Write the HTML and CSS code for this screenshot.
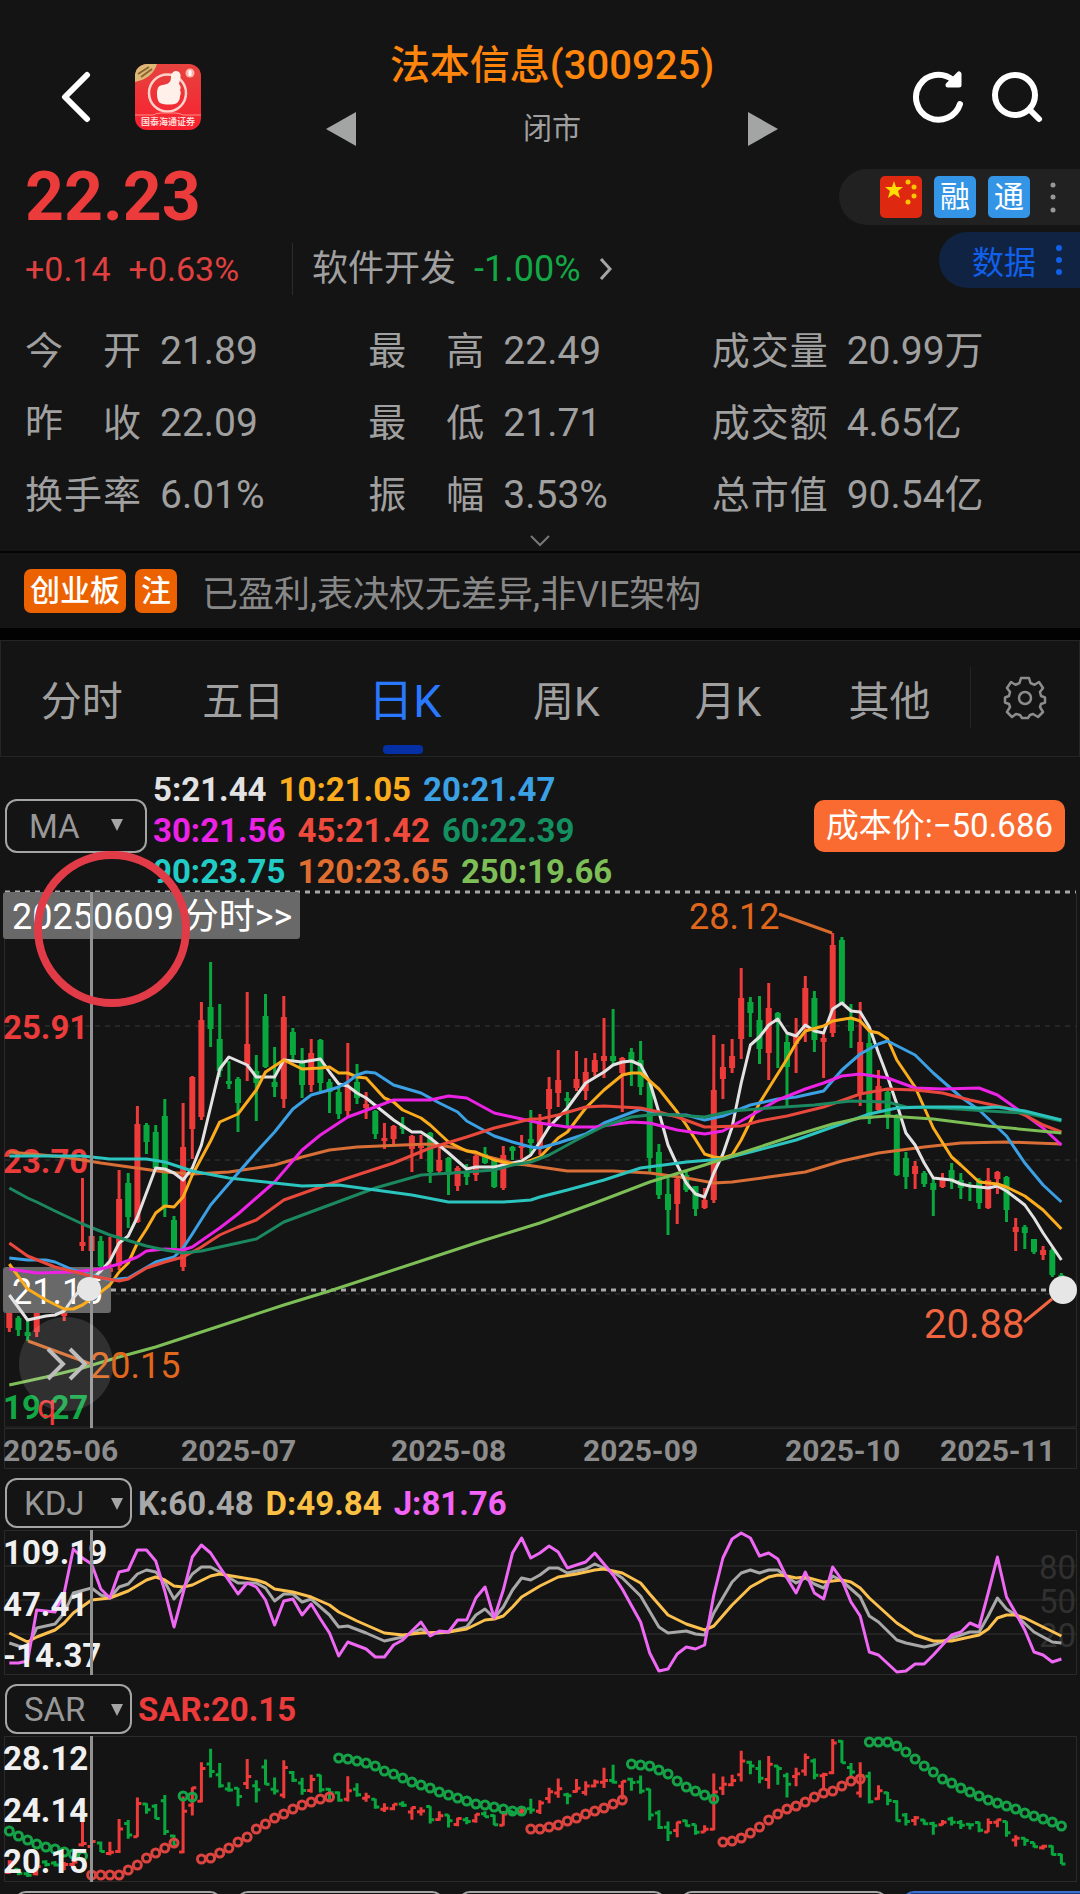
FILE: index.html
```html
<!DOCTYPE html>
<html lang="zh-CN">
<head>
  <meta charset="UTF-8" />
  <meta name="viewport" content="width=device-width, initial-scale=1.0"/>
  <meta name="theme-color" content="#141414">
  <title>法本信息(300925)</title>
  <link rel="stylesheet" href="styles.css">
</head>
<body>
  <header class="topbar">
    <div class="topbar-left">
      <button class="icon-btn back" aria-label="返回">
        <svg width="32" height="52" viewBox="0 0 32 52"><path d="M27 4 5 26l22 22" fill="none" stroke="#fff" stroke-width="6" stroke-linecap="round" stroke-linejoin="round"/></svg>
      </button>
      <svg class="logo" width="66" height="66" viewBox="0 0 66 66">
        <defs>
          <linearGradient id="logoRed" x1="0" y1="0" x2="0" y2="1"><stop offset="0" stop-color="#e6433f"/><stop offset="1" stop-color="#f8202f"/></linearGradient>
          <clipPath id="logoClip"><rect width="66" height="66" rx="12"/></clipPath>
        </defs>
        <g clip-path="url(#logoClip)">
          <rect width="66" height="66" fill="url(#logoRed)"/>
          <path d="M0 0h22Q18 14 0 18z" fill="#dcb877"/>
          <path d="M3 10 14 3M6 13 17 5" stroke="#8b6230" stroke-width="2"/>
          <circle cx="32.500" cy="29" r="18.500" fill="none" stroke="#fbd3cb" stroke-width="2.500"/>
          <path d="M23 24c1-3 5-3 9-4 4-2 4-5 4-8 1-5 5-6 8-4 3 3 1 8 0 12 2 2 2 4 1 6 1 2 1 4 0 6 0 3-1 5-3 7-4 2-12 2-17 0-3-2-4-11-2-15z" fill="#fff1ea"/>
          <circle cx="55" cy="9" r="4.500" fill="#ffb3a8"/>
          <rect x="53.500" y="6" width="3" height="6" rx="1.500" fill="#fff"/>
          <path d="M0 51h18q4-2 8-2h14q4 0 8 2h18" fill="none" stroke="#ff8d85" stroke-width="1"/>
        </g>
        <text x="33" y="61" text-anchor="middle" class="logo-text">国泰海通证券</text>
      </svg>
    </div>
    <div class="topbar-title">
      <h1>法本信息(300925)</h1>
      <div class="market">
        <button class="icon-btn" aria-label="上一只"><svg width="30" height="34" viewBox="0 0 30 34"><path d="M30 0v34L0 17z" fill="#a3a5a4"/></svg></button>
        <span>闭市</span>
        <button class="icon-btn" aria-label="下一只"><svg width="30" height="34" viewBox="0 0 30 34"><path d="M0 0v34l30-17z" fill="#a3a5a4"/></svg></button>
      </div>
    </div>
    <div class="topbar-right">
      <button class="icon-btn" aria-label="刷新">
        <svg width="56" height="56" viewBox="0 0 56 56"><path d="M50 35A22.500 22.500 0 1 1 43 11" fill="none" stroke="#fff" stroke-width="6" stroke-linecap="round"/><path d="M49 5v11H38z" fill="#fff" stroke="#fff" stroke-width="5" stroke-linejoin="round"/></svg>
      </button>
      <button class="icon-btn" aria-label="搜索">
        <svg width="56" height="56" viewBox="0 0 56 56"><circle cx="27" cy="26" r="20" fill="none" stroke="#fff" stroke-width="6"/><path d="m42 41 9 9" stroke="#fff" stroke-width="6" stroke-linecap="round"/></svg>
      </button>
    </div>
  </header>

  <section class="quote">
    <div class="quote-main">
      <div class="price">22.23</div>
      <div class="quote-row">
        <div class="delta"><span>+0.14</span><span>+0.63%</span></div>
        <a class="sector" href="#sector">软件开发 <span class="down">-1.00%</span>
          <svg width="14" height="26" viewBox="0 0 14 26"><path d="m2 3 9 10-9 10" fill="none" stroke="#a5a5a5" stroke-width="3"/></svg>
        </a>
      </div>
    </div>
    <div class="quote-side">
      <div class="pill">
        <svg width="42" height="42" viewBox="0 0 42 42">
          <rect width="42" height="42" rx="5" fill="#de2910"/>
          <path d="m14 5 2 6h7l-5 4 2 7-6-4-6 4 2-7-5-4h7z" fill="#ffde00"/>
          <g fill="#ffc400"><circle cx="28" cy="6" r="2.500"/><circle cx="34" cy="11" r="2.500"/><circle cx="34" cy="20" r="2.500"/><circle cx="28" cy="26" r="2.500"/></g>
        </svg>
        <span class="chip">融</span>
        <span class="chip">通</span>
        <svg width="22" height="42" viewBox="0 0 22 42" fill="#989898"><circle cx="11" cy="9" r="2.500"/><circle cx="11" cy="21" r="2.500"/><circle cx="11" cy="34" r="2.500"/></svg>
      </div>
      <button class="data-btn">数据
        <svg width="22" height="42" viewBox="0 0 22 42" fill="#1160ea"><circle cx="11" cy="9" r="3"/><circle cx="11" cy="21" r="3"/><circle cx="11" cy="33" r="3"/></svg>
      </button>
    </div>
  </section>

  <dl class="stats">
    <div><dt>今 开</dt><dd>21.89</dd></div>
    <div><dt>最 高</dt><dd>22.49</dd></div>
    <div><dt>成交量</dt><dd>20.99万</dd></div>
    <div><dt>昨 收</dt><dd>22.09</dd></div>
    <div><dt>最 低</dt><dd>21.71</dd></div>
    <div><dt>成交额</dt><dd>4.65亿</dd></div>
    <div><dt>换手率</dt><dd>6.01%</dd></div>
    <div><dt>振 幅</dt><dd>3.53%</dd></div>
    <div><dt>总市值</dt><dd>90.54亿</dd></div>
  </dl>
  <button class="icon-btn expand" aria-label="展开">
    <svg width="22" height="12" viewBox="0 0 22 12"><path d="m2 1 9 9 9-9" fill="none" stroke="#777" stroke-width="2"/></svg>
  </button>

  <div class="notice">
    <span class="tag">创业板</span>
    <span class="tag">注</span>
    <p>已盈利,表决权无差异,非VIE架构</p>
  </div>

  <nav class="tabs">
    <button>分时</button>
    <button>五日</button>
    <button class="active">日K</button>
    <button>周K</button>
    <button>月K</button>
    <button>其他</button>
    <button class="settings" aria-label="设置">
      <svg width="44" height="44" viewBox="0 0 44 44" fill="none" stroke="#8c8c8c" stroke-width="2.500" stroke-linejoin="round">
        <path d="M18 2h8l1.500 5 4 1.800L36 6l4 6-3 4 1 4 4 1.500v5L38 28l-1 3 3 5-5 5-5-3-3 1-2 3h-6l-2-3-4-1-4 3-5-5 3-5-1-3-4-1.500v-5L6 20l1-4-3-4 4-6 4.500 2.800 4-1.800z"/>
        <circle cx="22" cy="22" r="6"/>
      </svg>
    </button>
  </nav>

  <section class="ma-head">
    <div class="picker">
      <select aria-label="主图指标"><option>MA</option><option>BOLL</option></select>
    </div>
    <div class="ma-values">
      <div><span class="c-ma5">5:21.44</span><span class="c-ma10">10:21.05</span><span class="c-ma20">20:21.47</span></div>
      <div><span class="c-ma30">30:21.56</span><span class="c-ma45">45:21.42</span><span class="c-ma60">60:22.39</span></div>
      <div><span class="c-ma90">90:23.75</span><span class="c-ma120">120:23.65</span><span class="c-ma250">250:19.66</span></div>
    </div>
    <div class="cost">成本价:−50.686</div>
  </section>

  <div class="chart-wrap">
    <svg id="kline" class="chart" viewBox="0 -2 1080 580">
      <path class="frame" d="M4.500 1v534h1072V1M4.500 536.500h1072v40H4.500z"/>
      <path class="grid dashed" d="M5 134h1071M5 268h1071M5 402h1071"/>
      <text class="axis up" x="3" y="147">25.91</text>
      <text class="axis up" x="3" y="281">23.70</text>
      <text class="axis down" x="3" y="527">19.27</text>
      <text class="mark up" x="37" y="526">q</text>
      <g id="candles"></g>
      <path class="cursor-dots" d="M5 0h1071M111 398h965"/>
      <rect class="tip" x="3" y="0" width="297" height="47" rx="3"/>
      <text class="tip-text" x="12" y="37">20250609 分时&gt;&gt;</text>
      <rect class="tip" x="3" y="375" width="108" height="46" rx="3"/>
      <text class="tip-text" x="12" y="412">21.15</text>
      <g id="ma"></g>
      <g class="extreme">
        <text x="689" y="37">28.12</text><path d="m779 22 53 19"/>
        <text x="90" y="486">20.15</text><path d="m28 449 63 23"/>
      </g>
      <g class="last-price"><text x="924" y="446">20.88</text><path d="m1024 430 28-23"/></g>
      <path class="cursor" d="M91.500 0v536"/>
      <circle cx="89" cy="397" r="12" fill="#e6e6e6"/>
      <circle cx="1063" cy="398" r="14" fill="#e6e6e6"/>
      <g class="dates">
        <text x="3" y="569">2025-06</text><text x="181" y="569">2025-07</text><text x="391" y="569">2025-08</text>
        <text x="583" y="569">2025-09</text><text x="785" y="569">2025-10</text><text x="940" y="569">2025-11</text>
      </g>
      <circle cx="112" cy="37" r="74" fill="none" stroke="#e23b48" stroke-width="8"/>
    </svg>
    <button class="icon-btn forward" aria-label="快进">
      <svg width="44" height="36" viewBox="0 0 44 36"><path d="m4 3 15 15L4 33M26 3l15 15-15 15" fill="none" stroke="#bdbdbd" stroke-width="4"/></svg>
    </button>
  </div>

  <section class="sub-head">
    <div class="picker"><select aria-label="副图指标一"><option>KDJ</option><option>MACD</option></select></div>
    <span class="c-k">K:60.48</span><span class="c-d">D:49.84</span><span class="c-j">J:81.76</span>
  </section>
  <svg id="kdj" class="chart" viewBox="0 0 1080 146">
    <path class="grid" d="M5 36h1071M5 70h1071M5 104h1071"/>
    <path class="frame" d="M4.500 .5h1072v144H4.500z"/>
    <g class="levels"><text x="1076" y="49">80</text><text x="1076" y="83">50</text><text x="1076" y="117">20</text></g>
    <g id="kdjLines"></g>
    <text class="axis" x="3" y="34">109.19</text>
    <text class="axis" x="3" y="86">47.41</text>
    <text class="axis" x="3" y="137">-14.37</text>
    <path class="cursor" d="M91.500 0v145"/>
  </svg>

  <section class="sub-head">
    <div class="picker"><select aria-label="副图指标二"><option>SAR</option><option>RSI</option></select></div>
    <span class="up">SAR:20.15</span>
  </section>
  <svg id="sar" class="chart" viewBox="0 0 1080 146">
    <path class="frame" d="M4.500 .5h1072v145H4.500z"/>
    <g id="sarBars"></g>
    <text class="axis" x="3" y="34">28.12</text>
    <text class="axis" x="3" y="86">24.14</text>
    <text class="axis" x="3" y="137">20.15</text>
    <path class="cursor" d="M91.500 0v146"/>
  </svg>

  <div class="dock">
    <button></button><button></button><button></button><button></button><button class="primary"></button>
  </div>

  <script src="chart.js"></script>
</body>
</html>
```
FILE: styles.css
```css
body {
  margin: 0;
  height: 100vh;
  overflow: hidden;
  font-family: Roboto, 'Noto Sans CJK SC', sans-serif;
  background-color: #141414;
  color: #a0a0a0;
}

button {
  font-family: inherit;
  color: inherit;
  cursor: pointer;
}

svg {
  display: block;
  flex: none;
}

.icon-btn {
  background: none;
  border: none;
  padding: 0;
}

.up { color: #eb3b3b; fill: #eb3b3b; }
.down { color: #12a845; fill: #12a845; }

/* Top bar */
.topbar {
  display: grid;
  grid-template-columns: 1fr auto 1fr;
  align-items: center;
  min-height: 114px;
  padding: 40px 36px 0 60px;
}

.topbar-left {
  display: flex;
  align-items: center;
  gap: 43px;
}

.logo-text {
  font-size: 9px;
  font-weight: bold;
  fill: #ffd9d5;
}

.topbar-title {
  width: 452px;
  align-self: start;
}

.topbar-title h1 {
  margin: 0 0 20px;
  text-align: center;
  font-size: 40px;
  line-height: 52px;
  font-weight: 500;
  color: #ff850d;
}

.market {
  display: flex;
  justify-content: space-between;
  align-items: center;
  font-size: 29px;
  line-height: 34px;
}

.topbar-right {
  display: flex;
  justify-content: flex-end;
  gap: 22px;
}

/* Price */
.quote {
  display: flex;
  justify-content: space-between;
}

.quote-main {
  padding: 4px 0 0 25px;
}

.price {
  margin-bottom: 7px;
  font-size: 68px;
  line-height: 78px;
  font-weight: bold;
  color: #eb3b3b;
}

.quote-row {
  display: flex;
  align-items: center;
}

.delta {
  display: flex;
  gap: 18px;
  min-width: 267px;
  font-size: 34px;
  color: #e04040;
}

.sector {
  display: flex;
  align-items: center;
  gap: 18px;
  padding-left: 19px;
  border-left: 1px solid #2b2b2b;
  font-size: 36px;
  line-height: 52px;
  color: inherit;
  text-decoration: none;
}

.quote-side {
  display: flex;
  flex-direction: column;
  align-items: flex-end;
  gap: 7px;
  padding-top: 15px;
}

.pill, .data-btn {
  display: flex;
  align-items: center;
  box-sizing: border-box;
  height: 56px;
  border-radius: 28px 0 0 28px;
}

.pill {
  gap: 12px;
  padding: 0 16px 0 41px;
  background-color: #212121;
}

.chip {
  width: 42px;
  border-radius: 5px;
  background-color: #3495e6;
  color: #fff;
  font-size: 30px;
  line-height: 42px;
  text-align: center;
}

.data-btn {
  gap: 12px;
  padding: 0 10px 0 33px;
  border: none;
  background-color: #102342;
  color: #1160ea;
  font-size: 32px;
}

/* Stats */
.stats {
  display: grid;
  grid-template-columns: repeat(3, 1fr);
  margin: 20px 25px 0;
  font-size: 39px;
  line-height: 72px;
}

.stats div {
  display: flex;
  gap: 19px;
}

.stats dt {
  width: 116px;
  font-size: 38px;
  text-align-last: justify;
}

.stats dd {
  margin: 0;
  white-space: nowrap;
}

.expand {
  display: flex;
  justify-content: center;
  align-items: center;
  width: 100%;
  height: 20px;
}

.notice {
  display: flex;
  align-items: center;
  gap: 9px;
  height: 75px;
  padding: 0 24px;
  border-top: 2px solid #050505;
  border-bottom: 12px solid #020202;
}

.tag {
  padding: 0 6px;
  border-radius: 7px;
  background-color: #ec6200;
  color: #fff;
  font-size: 30px;
  line-height: 44px;
  font-weight: 500;
}

.notice p {
  margin: 0 0 0 16px;
  font-size: 36px;
  color: #888;
}

/* Period tabs */
.tabs {
  display: flex;
  box-sizing: border-box;
  height: 117px;
  border: 1px solid #252525;
}

.tabs button {
  position: relative;
  flex: 162;
  padding: 0 0 2px;
  background: none;
  border: none;
  font-size: 41px;
}

.tabs .active {
  font-size: 45px;
  color: #2a78ff;
}

.tabs .active::after {
  content: '';
  position: absolute;
  left: calc(50% - 22px);
  bottom: 2px;
  width: 40px;
  height: 9px;
  border-radius: 4px;
  background-color: #0530a5;
}

.tabs .settings {
  flex: 108;
  display: flex;
  justify-content: center;
  align-items: center;
  margin: 26px 0 28px;
  padding: 0;
  border-left: 1px solid #252525;
}

/* Indicator pickers */
.picker {
  position: relative;
  flex: none;
  width: 127px;
}

.picker select {
  appearance: none;
  display: block;
  box-sizing: border-box;
  width: 100%;
  height: 50px;
  padding: 0 17px;
  border: 2px solid #a5a5a5;
  border-radius: 12px;
  background: none;
  color: #989898;
  font-family: inherit;
  font-size: 33px;
}

.picker::after {
  content: '';
  position: absolute;
  right: 9px;
  top: 20px;
  border: 6px solid transparent;
  border-top: 12px solid #a5a5a5;
  border-bottom: none;
  pointer-events: none;
}

.ma-head {
  display: flex;
  align-items: flex-start;
  gap: 6px;
  padding: 0 15px 0 5px;
}

.ma-head .picker {
  width: 142px;
  margin-top: 42px;
}

.ma-head .picker::after {
  right: 24px;
}

.ma-head select {
  height: 54px;
  padding: 0 22px;
}

.ma-values {
  flex: 1;
  padding-top: 12px;
  height: 121px;
  font-size: 33px;
  line-height: 41px;
  font-weight: bold;
}

.ma-values div {
  display: flex;
  gap: 12px;
}

.cost {
  margin-top: 43px;
  padding: 0 12px;
  border-radius: 10px;
  background-color: #fa6b31;
  color: #fff;
  font-size: 33px;
  line-height: 52px;
}

.sub-head {
  display: flex;
  align-items: center;
  gap: 12px;
  padding: 8px 5px 2px;
  font-size: 33px;
  font-weight: bold;
}

.sub-head .picker {
  margin-right: -6px;
}

.c-ma5 { color: #e2e2e2; stroke: #e2e2e2; }
.c-ma10 { color: #fbac1c; stroke: #fbac1c; }
.c-ma20 { color: #3ba0e4; stroke: #3ba0e4; }
.c-ma30 { color: #ec22e4; stroke: #ec22e4; }
.c-ma45 { color: #f04a3c; stroke: #e9483c; }
.c-ma60 { color: #149060; stroke: #1b8860; }
.c-ma90 { color: #22ccc6; stroke: #2cc4be; }
.c-ma120 { color: #e06e30; stroke: #d96e36; }
.c-ma250 { color: #7dbe57; stroke: #7dbe57; }
.c-k { color: #a8a8a8; stroke: #a8a8a8; }
.c-d { color: #fcc044; stroke: #fcc04e; }
.c-j { color: #f363f8; stroke: #ee68f4; }

/* Charts */
.chart-wrap {
  position: relative;
}

.chart {
  width: 100%;
  height: auto;
  overflow: visible;
}

.chart polyline {
  fill: none;
  stroke-width: 3;
  stroke-linejoin: round;
}

.frame {
  fill: none;
  stroke: #2a2a2a;
}

.grid {
  stroke: #222;
  stroke-width: 2;
}

.dashed {
  stroke: #262626;
  stroke-dasharray: 5 5;
}

.cursor {
  stroke: #929292;
  stroke-width: 3;
}

.cursor-dots {
  stroke: #a8a8a8;
  stroke-width: 3;
  stroke-dasharray: 5 5;
}

.axis {
  font-size: 33px;
  font-weight: bold;
}

.axis:not(.up):not(.down) {
  fill: #f0f0f0;
}

.mark {
  font-size: 34px;
}

.tip {
  fill: #696969;
}

.tip-text {
  font-size: 36px;
  fill: #fff;
}

.dates {
  font-size: 30px;
  font-weight: bold;
  fill: #8d8d8d;
}

.extreme {
  font-size: 36px;
  fill: #e0671c;
}

.extreme path {
  stroke: #d86b2c;
  stroke-width: 3;
}

.last-price {
  font-size: 40px;
  fill: #f0643f;
}

.last-price path {
  stroke: #f0643f;
  stroke-width: 3;
}

.levels {
  font-size: 33px;
  fill: #303030;
  text-anchor: end;
}

.bar-up { fill: #ee3b3a; stroke: #ee3b3a; }
.bar-down { fill: #08a83e; stroke: #08a83e; }

.dot-up { fill: none; stroke: #dc4440; stroke-width: 3; }
.dot-down { fill: none; stroke: #16a247; stroke-width: 3; }

.forward {
  position: absolute;
  left: 19px;
  top: 427px;
  display: flex;
  justify-content: center;
  align-items: center;
  width: 94px;
  height: 94px;
  border-radius: 50%;
  background-color: rgba(255, 255, 255, 0.12);
}

/* Bottom index dock */
.dock {
  display: flex;
  gap: 14px;
  padding: 9px 0 0 14px;
}

.dock button {
  flex: none;
  width: 208px;
  height: 60px;
  border: 2px solid #a5a5a5;
  border-radius: 12px;
  background: none;
}

.dock .primary {
  border-color: #3f72cf;
  background-color: #143a80;
}
```
FILE: chart.js
```js
const NS = 'http://www.w3.org/2000/svg';
const x = i => 9.3 + i * 9.149;

// [direction, high, body top, body bottom, low]
const candles = [
  [1,400,405,436,440],[0,424,426,438,444],[0,429,440,444,449],[1,415,418,440,445],[0,400,405,412,418],
  [0,402,408,414,418],[1,405,412,424,429],[1,400,405,412,418],[1,286,350,354,359],[1,343,344,359,360],
  [0,344,349,374,375],[1,345,376,380,385],[1,278,307,374,378],[0,281,291,325,336],[1,214,232,330,331],
  [0,231,233,250,262],[0,233,240,276,278],[0,207,224,315,325],[0,324,328,356,357],[1,211,255,375,379],
  [1,184,185,237,267],[1,110,128,225,228],[0,70,115,137,155],[0,112,147,179,185],[0,169,189,192,197],
  [0,185,187,211,240],[1,100,152,173,189],[0,163,179,191,229],[0,102,124,175,176],[0,155,190,195,205],
  [1,104,125,207,216],[0,136,140,163,168],[0,156,171,193,206],[1,147,161,193,200],[0,147,148,191,199],
  [0,187,190,200,221],[0,196,200,222,227],[1,151,194,219,226],[0,172,190,206,212],[1,200,212,216,227],
  [0,218,219,242,247],[1,231,246,249,257],[1,233,234,247,252],[0,225,233,237,242],[1,243,244,257,280],
  [1,243,254,256,267],[0,240,241,280,291],[1,255,268,279,283],[0,265,266,283,303],[1,274,276,294,299],
  [0,272,280,285,293],[1,263,264,283,289],[0,255,262,271,272],[0,265,267,295,296],[1,254,263,296,298],
  [0,254,255,259,268],[1,243,254,256,267],[0,218,247,251,262],[1,222,230,255,263],[1,185,197,217,231],
  [1,158,188,201,215],[0,200,206,209,234],[1,159,187,196,199],[1,166,180,199,208],[1,161,168,180,184],
  [1,126,164,169,186],[0,117,164,169,173],[1,165,166,181,220],[0,156,160,170,194],[0,149,168,195,203],
  [0,188,190,266,282],[0,252,260,303,307],[0,285,302,318,343],[1,286,287,312,332],[0,280,283,298,300],
  [0,294,294,317,324],[1,296,308,316,317],[1,143,198,308,311],[1,152,175,187,207],[1,147,164,176,181],
  [1,76,106,147,167],[0,105,110,121,145],[0,104,128,157,172],[1,91,116,161,188],[0,120,121,128,176],
  [0,141,150,175,214],[1,126,144,152,181],[1,84,96,136,150],[0,99,106,148,160],[1,141,146,150,186],
  [1,41,53,141,145],[0,45,48,111,112],[0,112,125,139,156],[1,110,150,201,214],[0,138,151,227,232],
  [1,178,194,218,221],[0,198,200,223,237],[0,222,226,283,284],[0,260,266,285,297],[1,269,274,282,297],
  [0,279,281,292,295],[0,286,291,298,324],[1,281,287,295,296],[0,271,278,287,297],[0,281,288,296,307],
  [0,290,293,295,309],[0,286,288,311,317],[1,276,288,316,317],[1,279,280,287,302],[0,284,285,318,330],
  [1,326,335,340,359],[0,333,335,341,357],[0,347,347,360,362],[1,354,358,363,368],[0,356,358,383,385],
  [0,381,383,411,411]
];

// each line is index, y, index, y ...
const maLines = {
  'c-ma120': [0,260,6,265,10,271,17,280,20,282,24,280,27,276,29,273,32,265,35,258,38,255,43,253,46,252,49,256,52,264,55,271,58,275,61,279,66,279,70,281,74,286,77,291,79,290,83,285,87,280,91,269,95,261,100,255,104,251,109,250,115,252],
  'c-ma5': [0,403,2,428,4,424,5,423,6,419,7,406,8,395,10,379,11,369,12,351,13,344,14,325,16,276,17,277,18,281,19,288,20,276,21,253,22,215,23,177,24,165,26,173,27,185,29,185,30,168,32,170,34,167,35,180,36,192,37,194,38,201,39,206,42,228,44,240,45,240,46,246,48,261,50,277,51,275,53,275,55,271,56,269,57,263,58,250,59,235,61,216,63,191,65,180,66,173,67,170,68,169,69,173,70,190,71,220,72,253,73,273,74,291,75,302,76,305,77,281,78,262,79,235,80,191,81,153,82,145,83,133,84,127,85,141,86,144,87,133,88,139,89,141,90,117,91,111,92,119,93,120,94,135,95,161,96,185,97,212,98,241,99,253,100,271,101,286,103,288,104,292,105,294,107,296,108,294,109,299,110,306,111,313,112,326,113,341,115,368],
  'c-ma10': [0,372,2,397,4,408,6,417,7,417,8,413,10,400,11,393,12,380,13,371,14,351,15,337,16,321,17,314,18,315,19,305,20,283,22,249,23,230,25,222,27,198,28,180,30,168,32,177,34,176,35,175,36,181,37,181,38,185,39,186,41,206,42,210,43,218,45,226,46,233,48,250,50,259,51,260,53,268,55,272,56,272,58,265,60,246,61,240,63,216,65,198,67,183,68,181,69,181,71,197,73,220,74,233,76,262,77,265,78,266,79,263,80,248,82,211,85,167,86,151,87,139,89,134,90,129,92,126,93,129,94,139,95,141,96,147,97,168,99,195,101,236,103,265,104,273,106,290,108,292,109,295,111,304,113,318,115,337],
  'c-ma20': [0,366,2,368,4,368,5,370,7,378,9,383,11,388,13,386,16,370,18,365,19,356,20,342,22,313,25,281,27,260,29,240,31,217,33,203,35,198,36,195,37,190,38,183,39,180,40,181,42,193,45,201,47,211,49,220,50,229,53,244,55,250,57,255,58,256,60,251,63,242,65,231,69,217,72,223,74,223,76,228,78,224,81,213,84,207,86,205,89,199,91,178,92,170,93,162,95,152,96,149,99,163,101,181,104,205,106,218,109,244,111,271,113,293,115,310],
  'c-ma30': [0,377,3,381,7,380,10,377,12,372,14,365,15,359,17,357,19,358,20,355,23,336,25,322,27,306,29,290,32,258,34,243,37,225,40,215,42,208,46,208,48,204,50,206,53,221,57,229,58,231,61,235,64,235,68,230,70,231,73,238,76,242,78,239,80,229,84,208,87,197,89,191,91,184,93,182,96,186,99,196,102,197,106,196,108,203,110,216,113,236,115,253],
  'c-ma45': [0,351,2,364,5,375,9,384,12,389,13,387,15,376,17,370,19,365,21,355,23,343,25,335,27,328,30,308,34,295,37,286,42,271,46,256,50,245,53,236,57,227,58,227,60,223,63,215,65,214,69,216,71,220,73,225,76,235,80,234,82,229,85,224,89,215,93,202,96,197,99,198,102,201,105,208,109,216,111,223,113,233,115,240],
  'c-ma60': [0,296,2,306,3,310,5,319,8,332,11,343,15,354,17,358,19,361,21,359,23,355,25,351,27,347,30,330,35,313,40,296,45,283,50,280,53,278,55,273,57,270,59,263,62,248,65,234,68,225,71,222,76,225,79,219,83,216,88,213,92,209,96,210,98,215,102,216,107,219,111,221,115,229],
  'c-ma90': [0,264,8,264,11,267,15,267,17,270,20,279,24,286,28,290,32,294,36,293,40,298,44,303,48,310,54,310,57,308,58,305,61,298,65,288,69,276,74,270,78,267,81,260,86,248,90,235,94,222,97,216,100,215,104,215,106,216,108,215,111,219,115,228],
  'c-ma250': [0,493,4,485,8,476,12,465,16,455,20,443,25,428,30,413,35,399,40,384,46,366,52,348,58,331,64,311,70,290,76,273,80,261,86,243,90,232,93,226,96,224,101,227,107,234,115,241]
};

const kdjLines = {
  'c-k': [0,113,1,116,2,117,3,98,5,94,6,83,7,63,9,58,10,65,11,68,12,57,13,54,14,44,15,40,16,42,17,52,18,69,19,58,20,44,21,37,22,37,23,42,25,53,27,53,28,58,29,71,30,64,31,64,32,72,33,69,35,85,36,97,37,96,39,103,41,111,43,107,45,99,46,104,48,102,50,97,51,85,52,79,53,88,54,77,55,60,56,48,57,50,58,45,59,38,60,38,61,43,63,39,64,34,66,42,67,48,69,66,71,97,72,103,74,101,75,104,76,105,77,83,79,52,80,43,81,40,82,43,83,40,84,40,85,47,86,53,87,48,88,54,89,58,90,46,91,51,93,67,94,86,95,92,97,110,98,113,100,117,101,115,103,108,105,102,106,102,107,86,108,68,109,79,110,85,112,102,114,112,115,113],
  'c-d': [0,103,2,112,3,107,5,100,6,93,7,83,9,70,11,68,13,61,15,50,16,47,17,50,18,56,19,57,20,55,22,46,23,44,25,47,27,50,28,53,29,59,31,62,33,67,35,75,36,82,38,91,41,103,43,105,45,103,48,102,50,99,52,90,53,89,54,86,55,77,56,67,58,56,60,47,62,44,64,40,65,39,67,43,69,53,70,64,72,85,74,94,76,100,77,96,79,75,81,57,83,47,84,45,85,46,86,48,87,47,89,52,90,51,91,50,92,52,93,58,94,68,97,93,99,105,101,111,103,111,105,107,106,105,107,99,108,88,109,85,110,85,111,88,113,97,115,106],
  'c-j': [0,133,1,133,2,131,3,80,5,82,6,63,7,19,8,28,9,34,10,59,11,68,12,42,13,40,14,20,15,20,16,31,17,61,18,97,19,63,20,27,21,15,22,23,23,37,25,64,26,53,27,57,28,70,29,95,30,71,31,69,32,85,33,74,34,89,35,103,36,126,37,112,39,119,40,127,41,127,42,115,43,110,45,92,46,106,47,101,48,102,49,90,50,90,51,68,52,57,53,88,54,60,55,23,56,8,57,28,58,23,59,16,60,22,61,38,62,35,63,32,64,23,66,45,67,59,69,92,70,123,71,141,72,139,73,124,74,117,75,119,76,115,77,65,78,28,79,9,80,3,81,8,82,26,83,23,84,29,85,48,86,63,87,42,88,63,89,69,90,37,91,50,92,72,93,86,94,122,95,125,97,142,98,141,99,134,100,134,101,125,103,105,104,102,105,93,106,97,107,63,108,27,109,67,110,83,111,100,112,122,113,125,114,132,115,129]
};

// [direction, first index, ys...]
const sarRuns = [
  [0,0,95,100,104,108,111,113,116,118,120],
  [1,9,139,139,139,139,134,129,122,117,112,107],
  [0,19,60,61],
  [1,21,123,122,117,112,106,101,93,88,82,78,73,69,66,63,61],
  [0,36,22,23,25,27,30,35,38,42,46,49,52,56,59,62,65,68,69,71,73,75,75],
  [1,57,93,93,91,89,85,82,78,75,72,68,64],
  [0,68,28,29,30,34,38,45,51,55,59,63],
  [1,78,106,105,102,97,91,84,78,73,70,66,61,57,55,50,45,43],
  [0,94,6,6,6,10,16,23,30,36,43,47,52,56,60,64,67,70,73,77,80,83,86,90]
];

function add(parent, tag, attrs) {
  const el = document.createElementNS(NS, tag);
  for (const key in attrs) el.setAttribute(key, attrs[key]);
  document.getElementById(parent).appendChild(el);
}

function drawLines(parent, lines) {
  for (const [name, data] of Object.entries(lines)) {
    const points = [];
    for (let n = 0; n < data.length; n += 2) points.push(x(data[n]).toFixed(1) + ',' + data[n + 1]);
    add(parent, 'polyline', { class: name, points: points.join(' ') });
  }
}

const sarY = y => 3 + (y - 41) * 0.338;

candles.forEach(([up, high, top, bottom, low], i) => {
  const cls = up ? 'bar-up' : 'bar-down';
  const cx = x(i).toFixed(1);
  add('candles', 'path', { class: cls, 'stroke-width': 3, d: `M${cx} ${high}V${low}` });
  add('candles', 'rect', { class: cls, 'stroke-width': 0, x: cx - 3, y: top, width: 6, height: Math.max(bottom - top, 2) });

  const open = sarY(up ? bottom : top);
  const close = sarY(up ? top : bottom);
  add('sarBars', 'path', {
    class: cls, 'stroke-width': 3,
    d: `M${cx} ${sarY(high)}V${sarY(low)}M${cx} ${open}h-4M${cx} ${close}h4`
  });
});

drawLines('ma', maLines);
drawLines('kdjLines', kdjLines);

sarRuns.forEach(([up, start, ...ys]) => {
  ys.forEach((y, n) => add('sarBars', 'circle', { class: up ? 'dot-up' : 'dot-down', cx: x(start + n), cy: y, r: 4 }));
});
```
